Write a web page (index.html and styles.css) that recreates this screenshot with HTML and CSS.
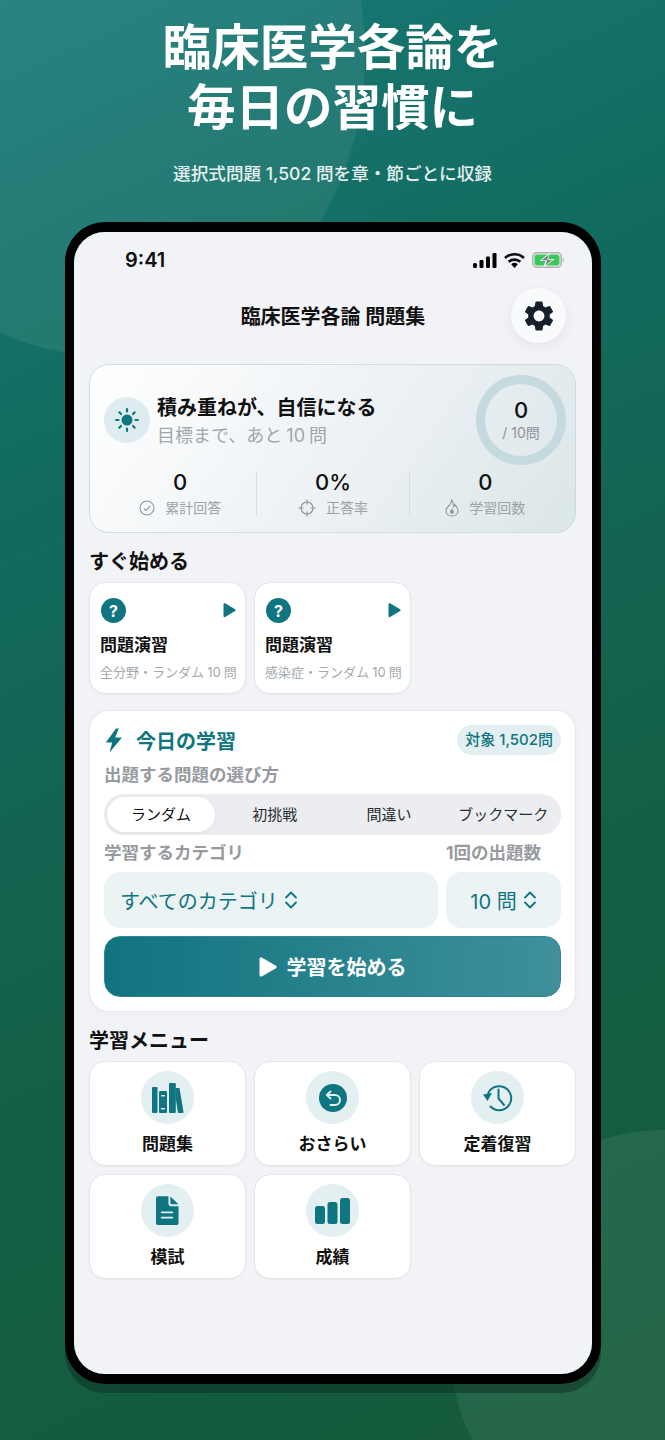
FILE: index.html
```html
<!DOCTYPE html>
<html lang="ja">
<head>
  <meta charset="UTF-8">
  <meta name="viewport" content="width=device-width, initial-scale=1.0">
  <title>臨床医学各論 問題集</title>
  <link rel="stylesheet" href="styles.css">
</head>
<body>
  <div class="page">
    <div class="blob blob-top"></div>
    <div class="blob blob-bottom"></div>

    <header class="promo">
      <h1>臨床医学各論を<br>毎日の習慣に</h1>
      <p>選択式問題 1,502 問を章・節ごとに収録</p>
    </header>

    <div class="phone">
      <div class="screen">
        <div class="status-bar">
          <span class="clock">9:41</span>
          <div class="status-icons">
            <svg width="24" height="15" viewBox="0 0 24 15"><rect x="0" y="10" width="4" height="5" rx="1.5"/><rect x="6.500" y="7" width="4" height="8" rx="1.200"/><rect x="13" y="3.500" width="4" height="11.500" rx="1.200"/><rect x="19.500" y="0" width="4" height="15" rx="1.200"/></svg>
            <svg width="21" height="15" viewBox="0 0 21 15"><path d="M1 5a14 14 0 0 1 19 0" fill="none" stroke="#111" stroke-width="2.600"/><path d="M4.600 8.800a9 9 0 0 1 11.800 0" fill="none" stroke="#111" stroke-width="2.600"/><path d="M10.500 15l-3.300-3.800a5 5 0 0 1 6.600 0z"/></svg>
            <svg width="33" height="16" viewBox="0 0 33 16"><rect x="0.800" y="0.800" width="28.400" height="14.400" rx="4" fill="none" stroke="#a9b2ab" stroke-width="1.500"/><rect x="2.500" y="2.500" width="25" height="11" rx="2.500" fill="#3cc75e"/><path d="M30.800 5.500c1.300.4 1.300 4.600 0 5z" fill="#a9b2ab"/><path d="M18.500 0L7.500 9h6l-2.500 7L22.500 7h-6.500z" fill="#f1f3f7"/><path d="M17 2.500L10 8.300h5.200l-1.700 5L20 7.700h-5.200z" fill="#717c74"/></svg>
          </div>
        </div>

        <div class="nav">
          <span></span>
          <h2>臨床医学各論 問題集</h2>
          <button class="gear">
            <svg width="36" height="36" viewBox="0 0 24 24"><path fill="#16202a" d="M19.140 12.940c.04-.3.06-.61.06-.94 0-.32-.02-.64-.07-.94l2.030-1.580a.49.49 0 0 0 .12-.61l-1.920-3.320a.488.488 0 0 0-.59-.22l-2.390.96c-.5-.38-1.030-.7-1.620-.94l-.36-2.540a.484.484 0 0 0-.48-.41h-3.840c-.24 0-.43.17-.47.41l-.36 2.540c-.59.24-1.130.57-1.620.94l-2.390-.96c-.22-.08-.47 0-.59.22L2.740 8.870c-.12.21-.08.47.12.61l2.030 1.580c-.05.3-.09.63-.09.94s.02.64.07.94l-2.030 1.580a.49.49 0 0 0-.12.61l1.920 3.320c.12.22.37.29.59.22l2.390-.96c.5.38 1.030.7 1.620.94l.36 2.540c.05.24.24.41.48.41h3.840c.24 0 .44-.17.47-.41l.36-2.540c.59-.24 1.130-.56 1.620-.94l2.390.96c.22.08.47 0 .59-.22l1.920-3.320c.12-.22.07-.47-.12-.61l-2.010-1.580zM12 15.600c-1.980 0-3.600-1.620-3.600-3.600s1.620-3.600 3.600-3.600 3.600 1.620 3.600 3.600-1.620 3.600-3.600 3.600z"/></svg>
          </button>
        </div>

        <main class="content">
          <section class="goal-card">
            <div class="goal-top">
              <div class="sun">
                <svg width="24" height="24" viewBox="0 0 24 24"><circle cx="12" cy="12" r="5.500" fill="#0f7580"/><g stroke="#0f7580" stroke-width="2.200" stroke-linecap="round"><path d="M12 1.100v2.400M12 20.500v2.400M1.100 12h2.400M20.500 12h2.400M4.300 4.300l1.700 1.700M18 18l1.700 1.700M4.300 19.700L6 18M18 6l1.700-1.700"/></g></svg>
              </div>
              <div class="goal-text">
                <h3>積み重ねが、自信になる</h3>
                <p>目標まで、あと 10 問</p>
              </div>
              <div class="ring">
                <strong>0</strong>
                <span>/ 10問</span>
              </div>
            </div>
            <div class="stats">
              <div class="stat">
                <strong>0</strong>
                <span class="stat-label">
                  <svg width="16" height="16" viewBox="0 0 16 16" fill="none" stroke="#8f979c" stroke-width="1.100"><circle cx="8" cy="8" r="7"/><path d="M4.800 8.300l2.200 2.200 4.200-4.600"/></svg>
                  累計回答
                </span>
              </div>
              <div class="stat">
                <strong>0%</strong>
                <span class="stat-label">
                  <svg width="18" height="18" viewBox="0 0 18 18" fill="none" stroke="#8f979c" stroke-width="1.200"><circle cx="9" cy="9" r="6"/><path d="M9 0.500v5M9 12.500v5M0.500 9h5M12.500 9h5"/></svg>
                  正答率
                </span>
              </div>
              <div class="stat">
                <strong>0</strong>
                <span class="stat-label">
                  <svg width="14" height="18" viewBox="0 0 14 18" fill="none" stroke="#8f979c" stroke-width="1.100"><path d="M6.500 1c.6 3-1 4-2.500 5.500C2.300 8.200 1 9.800 1 12c0 3 2.700 5 6 5s6-2 6-5c0-3-2-4.500-3-6.500-.4 1.200-.8 1.800-1.500 2.200C8.600 5 8 2.500 6.500 1z"/><path d="M7 9.500c-1 1.500-2 2.200-2 3.500 0 1.100 1 1.800 2 1.800s2-.7 2-1.800c0-1.300-1.100-2-2-3.500z" fill="#8f979c" stroke="none"/></svg>
                  学習回数
                </span>
              </div>
            </div>
          </section>

          <h2 class="section-title">すぐ始める</h2>
          <div class="tile-grid">
            <a class="quick-card">
              <div class="quick-top">
                <span class="help">?</span>
                <svg width="13" height="15" viewBox="0 0 13 15"><path fill="#0f7580" d="M0.500 1.200c0-.8.9-1.300 1.600-.9l10 6c.6.4.6 1.300 0 1.700l-10 6c-.7.4-1.600-.1-1.600-.9z"/></svg>
              </div>
              <h3>問題演習</h3>
              <p>全分野・ランダム 10 問</p>
            </a>
            <a class="quick-card">
              <div class="quick-top">
                <span class="help">?</span>
                <svg width="13" height="15" viewBox="0 0 13 15"><path fill="#0f7580" d="M0.500 1.200c0-.8.9-1.300 1.600-.9l10 6c.6.4.6 1.300 0 1.700l-10 6c-.7.4-1.600-.1-1.600-.9z"/></svg>
              </div>
              <h3>問題演習</h3>
              <p>感染症・ランダム 10 問</p>
            </a>
          </div>

          <section class="study-card">
            <div class="study-head">
              <div class="study-title">
                <svg width="18" height="25" viewBox="0 0 18 25"><path fill="#0f7580" d="M11 0.500L0.800 14.500h6.400L4.500 24.500 17 9.500h-6.800L13.800 0.500z"/></svg>
                <h3>今日の学習</h3>
              </div>
              <span class="badge">対象 1,502問</span>
            </div>

            <div class="field-label">出題する問題の選び方</div>
            <div class="segments">
              <span class="segment active">ランダム</span>
              <span class="segment">初挑戦</span>
              <span class="segment">間違い</span>
              <span class="segment">ブックマーク</span>
            </div>

            <div class="pickers">
              <div>
                <div class="field-label">学習するカテゴリ</div>
                <div class="picker">すべてのカテゴリ
                  <svg width="14" height="18" viewBox="0 0 14 18" fill="none" stroke="#0f7580" stroke-width="1.800" stroke-linecap="round" stroke-linejoin="round"><path d="M2 6.500L7 1.500l5 5M2 11.500l5 5 5-5"/></svg>
                </div>
              </div>
              <div>
                <div class="field-label">1回の出題数</div>
                <div class="picker picker-count">10 問
                  <svg width="14" height="18" viewBox="0 0 14 18" fill="none" stroke="#0f7580" stroke-width="1.800" stroke-linecap="round" stroke-linejoin="round"><path d="M2 6.500L7 1.500l5 5M2 11.500l5 5 5-5"/></svg>
                </div>
              </div>
            </div>

            <button class="start">
              <svg width="18" height="20" viewBox="0 0 18 20"><path fill="#fff" d="M0.500 1.800c0-1.100 1.200-1.800 2.200-1.200l14.300 8.200c.9.500.9 1.900 0 2.400L2.700 19.400c-1 .6-2.200-.1-2.200-1.200z"/></svg>
              学習を始める
            </button>
          </section>

          <h2 class="section-title">学習メニュー</h2>
          <div class="tile-grid menu-grid">
            <a class="menu-tile">
              <span class="menu-icon">
                <svg width="32" height="30" viewBox="0 0 32 30" fill="#0f7580"><rect x="0" y="4" width="5.500" height="26" rx="1"/><path d="M7 9a1 1 0 0 1 1-1h6a1 1 0 0 1 1 1v20a1 1 0 0 1-1 1H8a1 1 0 0 1-1-1z"/><rect x="9" y="12" width="4" height="1.400" fill="#e3eff1"/><rect x="9" y="25" width="4" height="1.400" fill="#e3eff1"/><rect x="17" y="0" width="6.800" height="30" rx="1"/><path d="M23.500 5h4l4 24q.2 1-.8 1h-4q-.7 0-.8-.7L23.500 14z"/></svg>
              </span>
              <span class="menu-label">問題集</span>
            </a>
            <a class="menu-tile">
              <span class="menu-icon">
                <svg width="28" height="28" viewBox="0 0 28 28"><circle cx="14" cy="14" r="14" fill="#0f7580"/><path d="M11.500 7.500L7.800 11l3.700 3.500M8 11h8a5 5 0 0 1 0 10h-4.500" fill="none" stroke="#e3eff1" stroke-width="2" stroke-linecap="round" stroke-linejoin="round"/></svg>
              </span>
              <span class="menu-label">おさらい</span>
            </a>
            <a class="menu-tile">
              <span class="menu-icon">
                <svg width="32" height="30" viewBox="0 0 32 30" fill="none" stroke="#0f7580" stroke-width="2" stroke-linecap="round"><path d="M5.500 12.500A12 12 0 1 1 8.500 23.500"/><path d="M1 11.500L10 10 5.500 18z" fill="#0f7580" stroke="none"/><path d="M16.500 6.500v9l5.500 6.500"/></svg>
              </span>
              <span class="menu-label">定着復習</span>
            </a>
            <a class="menu-tile">
              <span class="menu-icon">
                <svg width="23" height="29" viewBox="0 0 24 30"><path fill="#0f7580" d="M2 0h11v8a2.500 2.500 0 0 0 2.500 2.500H23.500V28a2 2 0 0 1-2 2H2a2 2 0 0 1-2-2V2a2 2 0 0 1 2-2z"/><path fill="#0f7580" d="M15 0.500l8.500 8H16a1 1 0 0 1-1-1z"/><rect x="5" y="16" width="13" height="1.800" rx=".9" fill="#e3eff1"/><rect x="5" y="21.500" width="13" height="1.800" rx=".9" fill="#e3eff1"/></svg>
              </span>
              <span class="menu-label">模試</span>
            </a>
            <a class="menu-tile">
              <span class="menu-icon">
                <svg width="35" height="26" viewBox="0 0 35 26" fill="#0f7580"><rect x="0" y="8" width="10" height="18" rx="2.500"/><rect x="12.500" y="4" width="10" height="22" rx="2.500"/><rect x="25" y="0" width="10" height="26" rx="2.500"/></svg>
              </span>
              <span class="menu-label">成績</span>
            </a>
          </div>
        </main>
      </div>
    </div>
  </div>
</body>
</html>
```

FILE: styles.css
```css
* {
  box-sizing: border-box;
}

body {
  margin: 0;
  font-family: Inter, "Noto Sans CJK JP", sans-serif;
  color: #111;
}

h1, h2, h3, p {
  margin: 0;
}

.page {
  position: relative;
  width: 665px;
  height: 1440px;
  overflow: hidden;
  padding-top: 18px;
  background: linear-gradient(155deg, #187a78 0%, #126a5e 30%, #135f45 65%, #155a3a 100%);
}

.blob {
  position: absolute;
  border-radius: 50%;
  background: rgba(255, 255, 255, 0.07);
}

.blob-top {
  left: -165px;
  top: -245px;
  width: 530px;
  height: 600px;
}

.blob-bottom {
  left: 450px;
  top: 1130px;
  width: 430px;
  height: 430px;
}

.promo {
  position: relative;
  text-align: center;
  color: #fff;
}

.promo h1 {
  font-size: 48.5px;
  line-height: 60px;
  font-weight: 700;
}

.promo p {
  margin-top: 24px;
  font-size: 17.6px;
  line-height: 24px;
  font-weight: 500;
  color: #e6f1f0;
}

.phone {
  position: relative;
  width: 536px;
  height: 1162px;
  margin: 36px 0 0 65px;
  border: solid #000;
  border-width: 10px 9px;
  border-radius: 40px;
  box-shadow: 0 9px 0 rgba(8, 40, 30, 0.45);
}

.screen {
  height: 100%;
  border-radius: 31px;
  overflow: hidden;
  padding-top: 16px;
  background: #f1f3f7;
}

.status-bar {
  display: flex;
  justify-content: space-between;
  align-items: center;
  height: 24px;
  padding: 0 27px 0 51px;
}

.clock {
  font-size: 20px;
  font-weight: 600;
}

.status-icons {
  display: flex;
  align-items: center;
  gap: 7px;
}

.nav {
  display: grid;
  grid-template-columns: 55px 1fr 55px;
  align-items: center;
  margin-top: 16px;
  padding: 0 26px;
}

.nav h2 {
  text-align: center;
  font-size: 20px;
  font-weight: 700;
}

.gear {
  display: flex;
  align-items: center;
  justify-content: center;
  width: 55px;
  height: 55px;
  padding: 0;
  border: none;
  border-radius: 50%;
  background: #f9fafc;
  box-shadow: 0 4px 14px rgba(0, 0, 0, 0.06);
}

.content {
  margin-top: 21px;
  padding: 0 16px 0 15px;
}

.goal-card {
  height: 169px;
  padding: 10px 9px 0 14px;
  border: 1px solid #cbdde0;
  border-radius: 20px;
  background: linear-gradient(125deg, #ffffff 0%, #eef2f5 50%, #dbe6e9 100%);
}

.goal-top {
  display: flex;
  align-items: center;
}

.sun {
  display: flex;
  align-items: center;
  justify-content: center;
  width: 46px;
  height: 46px;
  border-radius: 50%;
  background: #dfecef;
}

.goal-text {
  flex: 1;
  margin: 3px 0 0 7px;
}

.goal-text h3 {
  font-size: 20px;
  line-height: 27px;
  font-weight: 700;
}

.goal-text p {
  font-size: 18px;
  line-height: 27px;
  word-spacing: -1px;
  color: #a0a6aa;
}

.ring {
  display: flex;
  flex-direction: column;
  align-items: center;
  justify-content: center;
  width: 90px;
  height: 90px;
  border: 9px solid #c5dade;
  border-radius: 50%;
}

.ring strong {
  font-size: 22px;
  line-height: 26px;
  font-weight: 500;
}

.ring span {
  font-size: 14px;
  line-height: 20px;
  color: #8d9498;
}

.stats {
  display: grid;
  grid-template-columns: repeat(3, 1fr);
  margin: 6px 5px 0 0;
}

.stat {
  display: flex;
  flex-direction: column;
  align-items: center;
  height: 44px;
}

.stat + .stat {
  border-left: 1px solid #d5dfe2;
}

.stat strong {
  font-size: 22px;
  line-height: 22px;
  font-weight: 500;
}

.stat-label {
  display: flex;
  align-items: center;
  gap: 10px;
  margin-top: 5px;
  font-size: 14px;
  line-height: 20px;
  color: #9ca3a7;
}

.section-title {
  margin: 15px 0 6px;
  font-size: 20px;
  line-height: 28px;
  font-weight: 700;
}

.tile-grid {
  display: grid;
  grid-template-columns: repeat(3, 157px);
  gap: 8px;
}

.quick-card {
  height: 112px;
  padding: 15px 9px 0 11px;
  border: 1px solid #e3e6ea;
  border-radius: 16px;
  background: #fff;
  box-shadow: 0 1px 2px rgba(0, 0, 0, 0.04);
}

.quick-top {
  display: flex;
  align-items: center;
  justify-content: space-between;
}

.help {
  display: flex;
  align-items: center;
  justify-content: center;
  width: 25px;
  height: 25px;
  border-radius: 50%;
  background: #0f7580;
  color: #fff;
  font-size: 16px;
  font-weight: 700;
}

.quick-card h3 {
  margin: 9px 0 0 -1px;
  font-size: 17px;
  line-height: 26px;
  font-weight: 700;
}

.quick-card p {
  margin: 5px 0 0 -1px;
  font-size: 13px;
  line-height: 18px;
  white-space: nowrap;
  word-spacing: -0.5px;
  color: #a4a9ad;
}

.study-card {
  height: 302px;
  margin-top: 16px;
  padding: 14px 14px 0;
  border: 1px solid #e6e9ec;
  border-radius: 20px;
  background: #fff;
  box-shadow: 0 2px 6px rgba(0, 0, 0, 0.03);
}

.study-head {
  display: flex;
  align-items: center;
  justify-content: space-between;
  height: 30px;
}

.study-title {
  display: flex;
  align-items: center;
  gap: 13px;
  margin-left: 1px;
}

.study-title h3 {
  font-size: 20px;
  font-weight: 700;
  color: #0f7580;
}

.badge {
  padding: 0 8px;
  font-size: 15px;
  line-height: 30px;
  font-weight: 500;
  color: #0f7580;
  border-radius: 15px;
  background: #e3eff1;
}

.field-label {
  margin: 8px 0 7px;
  font-size: 17.5px;
  line-height: 24px;
  font-weight: 700;
  color: #979b9f;
}

.segments {
  display: grid;
  grid-template-columns: 108px 1fr 1fr 1fr;
  height: 41px;
  padding: 3px;
  border-radius: 20px;
  background: #ecedf0;
}

.segment {
  padding-left: 5px;
  text-align: center;
  font-size: 15px;
  line-height: 35px;
  white-space: nowrap;
  color: #2a2d30;
}

.segment.active {
  padding-left: 0;
  border-radius: 18px;
  background: #fff;
  color: #111;
  box-shadow: 0 1px 4px rgba(0, 0, 0, 0.06);
}

.pickers {
  display: grid;
  grid-template-columns: 334px 115px;
  gap: 8px;
  margin-top: -2px;
}

.picker {
  display: flex;
  align-items: center;
  gap: 6px;
  height: 56px;
  padding-left: 16px;
  font-size: 20px;
  color: #0f7580;
  border-radius: 16px;
  background: #ebf3f5;
}

.picker-count {
  justify-content: center;
  padding-left: 0;
}

.start {
  display: flex;
  align-items: center;
  justify-content: center;
  gap: 10px;
  width: 100%;
  height: 61px;
  margin-top: 8px;
  border: 1px solid #2f8894;
  border-radius: 16px;
  background: linear-gradient(90deg, #10747f 0%, #3f909b 100%);
  color: #fff;
  font-family: inherit;
  font-size: 20px;
  font-weight: 700;
}

.menu-grid {
  grid-auto-rows: 105px;
}

.menu-tile {
  display: flex;
  flex-direction: column;
  align-items: center;
  padding-top: 9px;
  border: 1px solid #e3e6ea;
  border-radius: 16px;
  background: #fff;
  box-shadow: 0 1px 2px rgba(0, 0, 0, 0.04);
}

.menu-icon {
  display: flex;
  align-items: center;
  justify-content: center;
  width: 53px;
  height: 53px;
  border-radius: 50%;
  background: #e3eff1;
}

.menu-label {
  margin-top: 8px;
  font-size: 17px;
  line-height: 24px;
  font-weight: 700;
}
```
